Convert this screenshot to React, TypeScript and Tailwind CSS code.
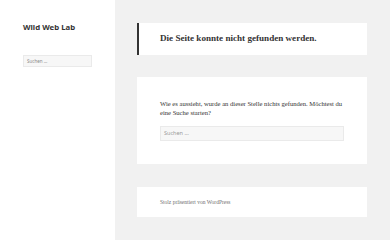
export default function App() {
  const serif = { fontFamily: '"Liberation Serif", serif' };
  return (
    <div className="flex h-[240px] w-[390px] overflow-hidden bg-[#f1f1f1]">
      <aside className="w-[115px] shrink-0 bg-white pl-[23px] pt-[22px]">
        <div className="text-[7.8px] font-bold leading-[10px] text-[#333]" style={{ fontFamily: '"Noto Sans", sans-serif' }}>
          Wild Web Lab
        </div>
        <div className="mt-[23px] flex h-[12px] w-[69px] items-center bg-[#f7f7f7] pl-[3px] text-[4.5px] text-[#888] border border-[#eaeaea]" style={{ fontFamily: '"Noto Sans", sans-serif' }}>
          Suchen …
        </div>
      </aside>
      <main className="flex-1 pl-[22px] pt-[23px]">
        <div className="flex h-[32px] w-[230px] items-center border-l-[2px] border-[#333] bg-white pl-[21px]">
          <h1 className="text-[9.1px] font-bold text-[#333]" style={serif}>
            Die Seite konnte nicht gefunden werden.
          </h1>
        </div>
        <div className="mt-[22px] h-[87px] w-[230px] bg-white pl-[23px] pt-[23px]">
          <p className="w-[184px] text-[6.6px] leading-[8.5px] text-[#333]" style={serif}>
            Wie es aussieht, wurde an dieser Stelle nichts gefunden. Möchtest du eine Suche starten?
          </p>
          <div className="mt-[9px] flex h-[15px] w-[184px] items-center border border-[#eaeaea] bg-[#f7f7f7] pl-[3px] text-[5.5px] text-[#999]" style={{ fontFamily: '"Noto Sans", sans-serif' }}>
            Suchen …
          </div>
        </div>
        <div className="mt-[23px] flex h-[30px] w-[230px] items-center bg-white pl-[23px]">
          <span className="text-[5.5px] text-[#707070]" style={serif}>Stolz präsentiert von WordPress</span>
        </div>
      </main>
    </div>
  );
}
